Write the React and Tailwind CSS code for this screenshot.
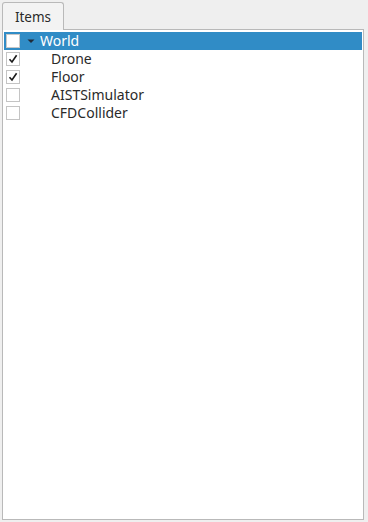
const ITEMS = [
  { name: "Drone", checked: true },
  { name: "Floor", checked: true },
  { name: "AISTSimulator", checked: false },
  { name: "CFDCollider", checked: false },
];

function Check({ checked, selected }) {
  return (
    <span
      className={
        "flex h-[14px] w-[14px] shrink-0 items-center justify-center border bg-white " +
        (selected ? "border-[#c8c8c8]" : "border-[#c4c4c4]")
      }
    >
      {checked && (
        <svg width="10" height="10" viewBox="0 0 10 10">
          <path d="M1.5 5.2 L4 8 L8.6 1.2" fill="none" stroke="#1a1a1a" strokeWidth="1.6" />
        </svg>
      )}
    </span>
  );
}

export default function App() {
  return (
    <div className="h-[522px] w-[368px] bg-[#efefef] pl-[2px] pt-[2px] font-['Noto_Sans',sans-serif] text-[14px] text-[#2a2a2a]">
      <div className="relative z-10 -mb-px flex h-[28px] w-[62px] items-center justify-center rounded-t-[3px] border border-b-0 border-[#b9b9b9] bg-[#f3f3f3] pt-[2px] text-[13.5px]">
        Items
      </div>
      <div className="flex h-[491px] w-[362px] flex-col border border-[#b9b9b9] bg-white px-px pt-[2px]">
        <div className="flex h-[18px] items-center bg-[#308cc6] pl-[2px] text-white">
          <Check checked={false} selected />
          <svg width="10" height="10" viewBox="0 0 10 10" className="ml-[6px]">
            <path d="M1.5 3.5 L8.5 3.5 L5 7 Z" fill="#1f2b3a" />
          </svg>
          <span className="ml-[4px] pb-px leading-none">World</span>
        </div>
        {ITEMS.map((it) => (
          <div key={it.name} className="flex h-[18px] items-center pl-[2px]">
            <Check checked={it.checked} />
            <span className="ml-[31px] pb-px leading-none">{it.name}</span>
          </div>
        ))}
      </div>
    </div>
  );
}
